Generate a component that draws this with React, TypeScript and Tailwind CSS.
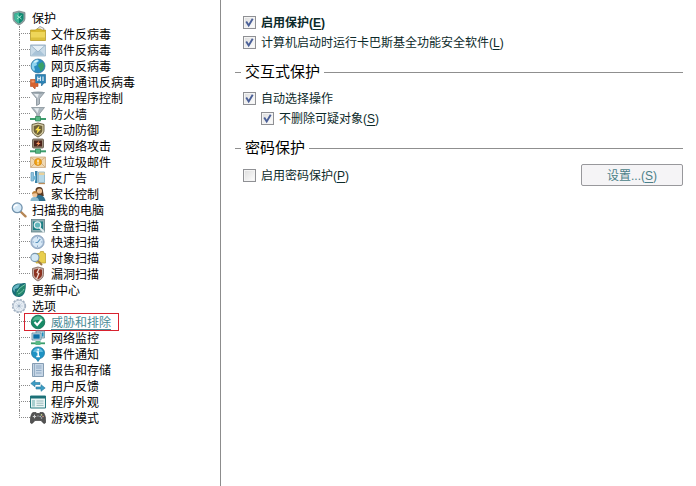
import { useState } from "react";
import type { ReactNode } from "react";
import clsx from "clsx";

const ICONS: Record<string, ReactNode> = {
  protection: (
    <>
      <path d="M2 2.500 8 1l6 1.500v6c0 3-3 5-6 6.500-3-1.500-6-3.500-6-6.500z" fill="#8fa3a3" stroke="#6d7f80" strokeWidth=".7" />
      <path d="M3.500 3.700 8 2.500l4.500 1.200v4.800c0 2.200-2.200 3.800-4.500 5-2.300-1.200-4.500-2.800-4.500-5z" fill="#0f8a72" />
      <path d="M8 2.500v11c-2.300-1.200-4.500-2.800-4.500-5V3.700z" fill="#3fb79a" />
      <path d="M6 5.500 10.500 9M10.500 5.500 6 9" stroke="#a8e6d2" strokeWidth="1" />
    </>
  ),
  folder: (
    <>
      <path d="M7 3 10 .5l4 2-1 4" fill="#f3f3f3" stroke="#888" strokeWidth=".8" />
      <path d="M.5 4h5l1-1h4L12 4h3.500v10.500H.5z" fill="#d9b92e" stroke="#b1931e" strokeWidth=".7" />
      <path d="M1 6h14v8H1z" fill="#eed65a" />
      <path d="M1 11.500h14V14H1z" fill="#dcc03c" />
    </>
  ),
  mail: (
    <>
      <path d="M.5 3h15v11H.5z" fill="#c9dbe8" stroke="#9fb6c7" strokeWidth=".8" />
      <path d="m1 13.500 5-5h4l5 5z" fill="#a9c4d8" />
      <path d="m.8 3.300 7.200 6.500 7.200-6.500z" fill="#e6f0f7" stroke="#8fabc0" strokeWidth=".8" />
    </>
  ),
  globe: (
    <>
      <circle cx="8" cy="8" r="7" fill="#2a8cc0" stroke="#2b6c93" strokeWidth=".7" />
      <path d="M2 6c1-3 3-4.500 6-4.500L9 3 6.500 5l.5 2-3 1.500L5 12l-1 1C2 11.500 1 9 2 6z" fill="#8fd4ef" />
      <path d="M9 5.500 12.500 4l2 3.500-1.500 4-2.500 2-1-3.500L8 8z" fill="#39a06a" />
      <path d="M4 3.500 7 2l1 1-3.500 2z" fill="#d9f3fb" />
    </>
  ),
  chat: (
    <>
      <path d="M5.500.5h10V9H14l-2.500 3V9h-6z" fill="#2d83b6" stroke="#1f6793" strokeWidth=".6" />
      <path d="M7.800 2.500v4.500M10.300 2.500v4.500M7.800 4.700h2.500M13 2.500v4.500" stroke="#fff" strokeWidth="1" />
      <path d="M.5 5.500H5V9.500h3v3H5.500L5 15l-2.500-2.500h-2z" fill="#d8632f" stroke="#b04a20" strokeWidth=".6" />
      <path d="M1.500 6.500H4.500V8.500h-3z" fill="#f09a6c" />
    </>
  ),
  funnel: (
    <>
      <path d="M1.500 2.500h13L9.500 8.500V14L6.500 15.500v-7z" fill="#b3bcc3" stroke="#828d95" strokeWidth=".8" />
      <path d="M3.500 3.300h5.500L7.500 8z" fill="#e8edf0" />
      <ellipse cx="8" cy="2.600" rx="6.300" ry="1.200" fill="#8f9ba3" />
    </>
  ),
  firewall: (
    <>
      <path d="M1.500 1.500h13L9.300 8v3H6.700V8z" fill="#aeb9c0" stroke="#7e8a92" strokeWidth=".7" />
      <path d="M4 2.200h5L7.600 7z" fill="#e5ebee" />
      <path d="M0 13h16" stroke="#3c9d6d" strokeWidth="2" />
      <path d="M5.500 10.500h5v4.500h-5z" fill="#58b985" stroke="#2e8055" strokeWidth=".7" />
    </>
  ),
  bolt: (
    <>
      <path d="M2 2.500 8 1l6 1.500v6c0 3-3 5-6 6.500-3-1.500-6-3.500-6-6.500z" fill="#d8cfa8" stroke="#5f5435" strokeWidth=".9" />
      <path d="M3.700 3.900 8 2.800l4.300 1.100v4.600c0 2-2 3.500-4.300 4.700-2.300-1.200-4.300-2.700-4.300-4.700z" fill="#6f6238" />
      <path d="M9.500 3.500 5 8.300h2.500L6.500 12 11 7H8.500z" fill="#ffe24a" />
    </>
  ),
  attack: (
    <>
      <rect x="2.500" y="1" width="11" height="9" rx="1" fill="#9b8b78" stroke="#5c5145" strokeWidth=".8" />
      <path d="M4 2.500h8v6H4z" fill="#4d241b" />
      <path d="M9.500 2.500 6 6h2L7 8.500 10.500 5H8.500z" fill="#ff9a62" />
      <path d="M0 13.300h16" stroke="#3c9d6d" strokeWidth="2" />
      <path d="M5.500 11h5v4.300h-5z" fill="#58b985" stroke="#2e8055" strokeWidth=".7" />
    </>
  ),
  spam: (
    <>
      <path d="M.5 3h15v10.500H.5z" fill="#efd9b4" stroke="#c9a981" strokeWidth=".8" />
      <path d="m1 13 4-4M15 13l-4-4M1 3.500l4 3M15 3.500l-4 3" stroke="#d2ab78" strokeWidth=".9" />
      <circle cx="8" cy="8" r="3.500" fill="#f2a516" stroke="#ce8110" strokeWidth=".7" />
      <path d="M8 5.800v2.700M8 9.300v1.200" stroke="#fff" strokeWidth="1.200" />
    </>
  ),
  banner: (
    <>
      <path d="M1 2.500h2.500v8.500H1z" fill="#8fc3df" stroke="#5d9cbd" strokeWidth=".7" />
      <path d="M5 1h2.500v12H5z" fill="#3a83a8" />
      <path d="M6 4.500 2.500 8 6 11z" fill="#6fb4d4" />
      <path d="M8.500 2h6v10.500h-6z" fill="#b7d9e8" stroke="#79a9bf" strokeWidth=".7" />
      <path d="M9 2.500h5.500v2.500H9z" fill="#e9d19a" />
      <path d="M8.500 13.500h6.500" stroke="#ba8d5c" strokeWidth="1.300" />
    </>
  ),
  parent: (
    <>
      <path d="M5.500 4C5.500 1.500 8 .5 9.500 1c2.500 0 3.500 2 3.500 4l.8 5H7z" fill="#5a3a22" />
      <circle cx="9.500" cy="5" r="2.600" fill="#edbf91" />
      <path d="M5 15c0-4 2-6 4.500-6s5.500 2 6 6z" fill="#2f6f8d" />
      <circle cx="4.800" cy="8.600" r="2.600" fill="#f0c69b" />
      <path d="M2 8.300c0-2.500 1.500-3.300 3-3.300s2.700 1.300 2.500 2.800C6 7 4 7 2 8.300z" fill="#b97d35" />
      <path d="M.5 15c0-2.500 1.500-4 4-4s4.500 1.500 4.500 4z" fill="#8ab8cd" />
    </>
  ),
  magnifier: (
    <>
      <path d="m9.500 9.500 5 4.800" stroke="#b58655" strokeWidth="2.400" strokeLinecap="round" />
      <circle cx="6.200" cy="5.800" r="4.900" fill="#d5e9f7" stroke="#7393ad" strokeWidth="1.300" />
      <path d="M3 6c0-2 1.500-3 3.500-3" stroke="#fff" strokeWidth="1.300" fill="none" />
    </>
  ),
  fullScan: (
    <>
      <rect x="1.500" y="1.500" width="13" height="12.500" fill="#8dadb2" stroke="#627f86" strokeWidth=".8" />
      <path d="M3 3.500h10v8.500H3z" fill="#1c7f84" />
      <path d="m9.500 9.500 4.500 4.500" stroke="#e4eef0" strokeWidth="1.800" />
      <circle cx="7.500" cy="7" r="3.200" fill="#62b7bb" stroke="#e4eef0" strokeWidth="1.200" />
    </>
  ),
  quickScan: (
    <>
      <circle cx="7.500" cy="8" r="6.700" fill="#a3b9d2" stroke="#7b95b3" strokeWidth=".7" />
      <circle cx="7.500" cy="8" r="5.300" fill="#d7e8f6" />
      <path d="M7.500 3v1.500M7.500 11.500V13M2.500 8H4M11 8h1.500" stroke="#8ba9c8" />
      <path d="M10.300 5 7.500 8.500H5.500" stroke="#5a93bd" strokeWidth="1.200" fill="none" />
    </>
  ),
  objectScan: (
    <>
      <path d="M6 3.500h3.500l1-2h3l.7 2h1.300v9.500H6z" fill="#e9cf4d" stroke="#b89b29" strokeWidth=".7" />
      <path d="m7.500 10.500 4 4" stroke="#9c7a4a" strokeWidth="2" strokeLinecap="round" />
      <circle cx="4.900" cy="7.500" r="4.100" fill="#d3e8f5" stroke="#7b98ae" strokeWidth="1.100" />
    </>
  ),
  vulnerability: (
    <>
      <path d="M2.500 2.500 8 1l5.500 1.500v6c0 3-2.500 5-5.500 6.500-3-1.500-5.500-3.500-5.500-6.500z" fill="#c1aaa2" stroke="#7d5f56" strokeWidth=".8" />
      <path d="M4 3.800 8 2.700l4 1.100v4.700c0 2-2 3.600-4 4.700-2-1.100-4-2.700-4-4.700z" fill="#8c3220" />
      <path d="M9.500 2 7.200 6.500l1.600 1L6.500 13" stroke="#f2ddd5" strokeWidth="1.300" fill="none" />
    </>
  ),
  update: (
    <>
      <path d="M1 8c0-4 3-6.500 7-6.500 2 .2 4-.5 6.500-.5.5 3 .3 5-.3 7.500C13.500 12.500 11 15 7.500 15S1 12 1 8z" fill="#1b6d77" />
      <path d="M1.500 7C3 3.500 6 2 9 2.300L7 6l-3 1-.5 3z" fill="#67b5c3" />
      <path d="M5 14c5 .5 8-2 9-6l.3-6-3.500 1.500C7 5 8 8 5 10z" fill="#23856c" />
      <path d="M6 10c2-4 5-5.500 8-7.500M7 12c3-1 5-3 6-5" stroke="#7fcdb2" strokeWidth=".9" fill="none" />
    </>
  ),
  gear: (
    <>
      <circle cx="8" cy="8" r="6.300" fill="#d8e2ec" stroke="#a3b1c2" strokeWidth="1.700" strokeDasharray="2.200 1.100" />
      <circle cx="8" cy="8" r="5.700" fill="#e6edf4" stroke="#a9b7c6" strokeWidth=".7" />
      <path d="M8 4v8M4 8h8M5.200 5.200l5.600 5.600M10.800 5.200l-5.600 5.600" stroke="#c1cfdd" strokeWidth=".8" />
      <circle cx="8" cy="8" r="1.300" fill="#9dafc2" />
    </>
  ),
  check: (
    <>
      <circle cx="8" cy="8" r="6.800" fill="#178a66" stroke="#0e6a4d" strokeWidth=".8" />
      <path d="M2.500 7C3 4 5.500 2.300 8 2.300s5 1.700 5.500 4.700C10 5.500 6 5.500 2.500 7z" fill="#4fb892" />
      <path d="m4.500 8 2.700 3 4.500-5.500" stroke="#fff" strokeWidth="2" fill="none" />
    </>
  ),
  monitor: (
    <>
      <path d="M6 1h8.500v7H6z" fill="#b9d3df" stroke="#6790a5" strokeWidth=".8" />
      <path d="M2 3h9v7H2z" fill="#d1e2ea" stroke="#5b879d" strokeWidth=".8" />
      <path d="M3.300 4.300h6.400v4.400H3.300z" fill="#0c6fa6" />
      <path d="M12 2.500h1.500v4H12z" fill="#1d8fc0" />
      <path d="M1 13.300h14" stroke="#3c9d6d" strokeWidth="1.800" />
      <path d="M5.500 11h5v4h-5z" fill="#58b985" />
    </>
  ),
  info: (
    <>
      <path d="M8 1a6 6 0 0 1 6.500 6c0 3-2 5-4.500 5.500L8 15.500l-2-3C3.500 12 1.500 10 1.500 7A6 6 0 0 1 8 1z" fill="#1f93c4" stroke="#15719b" strokeWidth=".7" />
      <path d="M3 6c.5-2.500 2.500-3.800 5-3.800S12.500 3.500 13 6z" fill="#63bce0" />
      <path d="M6.500 6h1.700v4.500M6.300 10.500h3.600M8.200 2.800v1.800" stroke="#fff" strokeWidth="1.500" fill="none" />
    </>
  ),
  report: (
    <>
      <path d="M2.500 1.500h11v13h-11z" fill="#c6d6e6" stroke="#7c94ac" strokeWidth=".9" />
      <path d="M4.500 2v12" stroke="#8aa3bb" strokeWidth=".8" />
      <path d="M6 4h5.500M6 6h5.500M6 8.500h5.500M6 11h5.500" stroke="#8ba6c2" strokeWidth=".9" />
    </>
  ),
  feedback: (
    <>
      <path d="M.8 5.500 5 2.200v2.300h5v2H5v2.300z" fill="#3c9cc4" stroke="#27799d" strokeWidth=".6" />
      <path d="M15.200 10 11 6.700V9H6v2h5v2.300z" fill="#3c9cc4" stroke="#27799d" strokeWidth=".6" />
    </>
  ),
  appearance: (
    <>
      <path d="M.5 2h15v12H.5z" fill="#eaf4f4" stroke="#277a80" strokeWidth="1" />
      <path d="M.5 2h15v2.500H.5z" fill="#1c7077" />
      <path d="M2 6h3v6.500H2z" fill="#a7cfd0" />
      <path d="M6.500 7h7M6.500 9.200h7M6.500 11.400h7" stroke="#8fb3b5" strokeWidth=".9" />
    </>
  ),
  gamepad: (
    <>
      <path d="M3 2.500h3l1 1h2l1-1h3c1.500.5 2.800 5 2.800 8.500 0 3-2 3-3 1.500L11 10.500H5l-1.800 2c-1 1.500-3 1.500-3-1.500C.2 7.500 1.500 3 3 2.500z" fill="#535353" stroke="#333" strokeWidth=".6" />
      <path d="M2.800 6.500h3.400M4.500 4.800v3.400" stroke="#d3d3d3" strokeWidth="1.100" />
      <circle cx="11.500" cy="4.900" r=".8" fill="#c6d18c" />
      <circle cx="13" cy="6.500" r=".8" fill="#d59a8d" />
      <circle cx="10.200" cy="6.500" r=".8" fill="#a9bccd" />
      <circle cx="11.500" cy="8" r=".8" fill="#b9b9b9" />
      <path d="M7 6h2" stroke="#aaa" strokeWidth=".8" />
    </>
  ),
};

type Item = { icon: string; label: string };
type Section = Item & { items: Item[] };

const SECTIONS: Section[] = [
  {
    icon: "protection",
    label: "保护",
    items: [
      { icon: "folder", label: "文件反病毒" },
      { icon: "mail", label: "邮件反病毒" },
      { icon: "globe", label: "网页反病毒" },
      { icon: "chat", label: "即时通讯反病毒" },
      { icon: "funnel", label: "应用程序控制" },
      { icon: "firewall", label: "防火墙" },
      { icon: "bolt", label: "主动防御" },
      { icon: "attack", label: "反网络攻击" },
      { icon: "spam", label: "反垃圾邮件" },
      { icon: "banner", label: "反广告" },
      { icon: "parent", label: "家长控制" },
    ],
  },
  {
    icon: "magnifier",
    label: "扫描我的电脑",
    items: [
      { icon: "fullScan", label: "全盘扫描" },
      { icon: "quickScan", label: "快速扫描" },
      { icon: "objectScan", label: "对象扫描" },
      { icon: "vulnerability", label: "漏洞扫描" },
    ],
  },
  { icon: "update", label: "更新中心", items: [] },
  {
    icon: "gear",
    label: "选项",
    items: [
      { icon: "check", label: "威胁和排除" },
      { icon: "monitor", label: "网络监控" },
      { icon: "info", label: "事件通知" },
      { icon: "report", label: "报告和存储" },
      { icon: "feedback", label: "用户反馈" },
      { icon: "appearance", label: "程序外观" },
      { icon: "gamepad", label: "游戏模式" },
    ],
  },
];

const ACTIVE = "威胁和排除";

const TreeLink = ({ icon, label }: Item) => {
  const active = label === ACTIVE;

  return (
    <a href="#" className="relative flex h-4 items-center gap-[5px] whitespace-nowrap">
      <svg viewBox="0 0 16 16" className="size-4 shrink-0" fill="none" aria-hidden="true">
        {ICONS[icon]}
      </svg>
      <span className={clsx("pt-0.5", active && "text-[#4a8a96] underline underline-offset-2")}>{label}</span>
      {active && <span className="pointer-events-none absolute -inset-y-px -right-2 -left-1.5 border border-[#d8222f]" />}
    </a>
  );
};

const Tree = () => (
  <nav className="w-[221px] shrink-0 border-r border-[#8c8c8c] pt-[10px] pl-[11px] text-black">
    <ul>
      {SECTIONS.map((section) => (
        <li key={section.label}>
          <div className="flex">
            <TreeLink icon={section.icon} label={section.label} />
          </div>
          <ul className="ml-2">
            {section.items.map((item, i) => (
              <li key={item.label} className="flex">
                <span className="flex h-4 w-[11px] shrink-0 flex-col">
                  <span className="h-2 border-b border-l border-dotted border-[#8a8a8a]" />
                  {i < section.items.length - 1 && <span className="h-2 border-l border-dotted border-[#8a8a8a]" />}
                </span>
                <TreeLink icon={item.icon} label={item.label} />
              </li>
            ))}
          </ul>
        </li>
      ))}
    </ul>
  </nav>
);

type CheckProps = { label: string; hotkey?: string; checked?: boolean; bold?: boolean };

const Check = ({ label, hotkey, checked = false, bold = false }: CheckProps) => {
  const [on, setOn] = useState(checked);

  return (
    <label className={clsx("flex h-5 items-center gap-[5px]", bold && "font-bold")}>
      <span className="relative flex size-[13px] shrink-0">
        <input
          type="checkbox"
          checked={on}
          onChange={(e) => setOn(e.target.checked)}
          className="peer size-[13px] appearance-none border border-[#8f9094] bg-linear-to-br from-[#dcdcdc] to-white outline-1 -outline-offset-2 outline-[#f4f4f4]"
        />
        <svg viewBox="0 0 13 13" className="pointer-events-none absolute inset-0 hidden peer-checked:block" aria-hidden="true">
          <path d="m3.200 5.500 2.500 4L9.700 2.800" fill="none" stroke="#4a5f97" strokeWidth="1.900" />
        </svg>
      </span>
      <span className="pt-0.5">
        {label}
        {hotkey && (
          <>
            (<span className="underline underline-offset-2">{hotkey}</span>)
          </>
        )}
      </span>
    </label>
  );
};

const Group = ({ title, children }: { title: string; children: ReactNode }) => (
  <section>
    <h2 className="flex h-5 items-center gap-1 text-[15px] whitespace-nowrap text-black">
      <span className="h-px w-[6px] bg-[#8f8f8f]" />
      {title}
      <span className="h-px flex-1 bg-[#8f8f8f]" />
    </h2>
    <div className="mt-[6px] pl-2">{children}</div>
  </section>
);

export default function App() {
  return (
    <div className="flex min-h-screen bg-white font-['Liberation_Sans','Noto_Sans_CJK_SC',sans-serif] text-[12px] leading-4 text-[#0c2a2a]">
      <Tree />
      <main className="flex flex-1 flex-col gap-[10px] pt-3 pr-[13px] pl-[14px]">
        <div className="pl-2">
          <Check label="启用保护" hotkey="E" checked bold />
          <Check label="计算机启动时运行卡巴斯基全功能安全软件" hotkey="L" checked />
        </div>
        <Group title="交互式保护">
          <Check label="自动选择操作" checked />
          <div className="pl-[18px]">
            <Check label="不删除可疑对象" hotkey="S" checked />
          </div>
        </Group>
        <Group title="密码保护">
          <div className="flex items-center justify-between">
            <Check label="启用密码保护" hotkey="P" />
            <button className="h-[22px] w-[102px] rounded-xs border border-[#98989c] bg-[#f5f4f6] pt-0.5 text-[#4b7f88]">
              设置...(<span className="underline underline-offset-2">S</span>)
            </button>
          </div>
        </Group>
      </main>
    </div>
  );
}
